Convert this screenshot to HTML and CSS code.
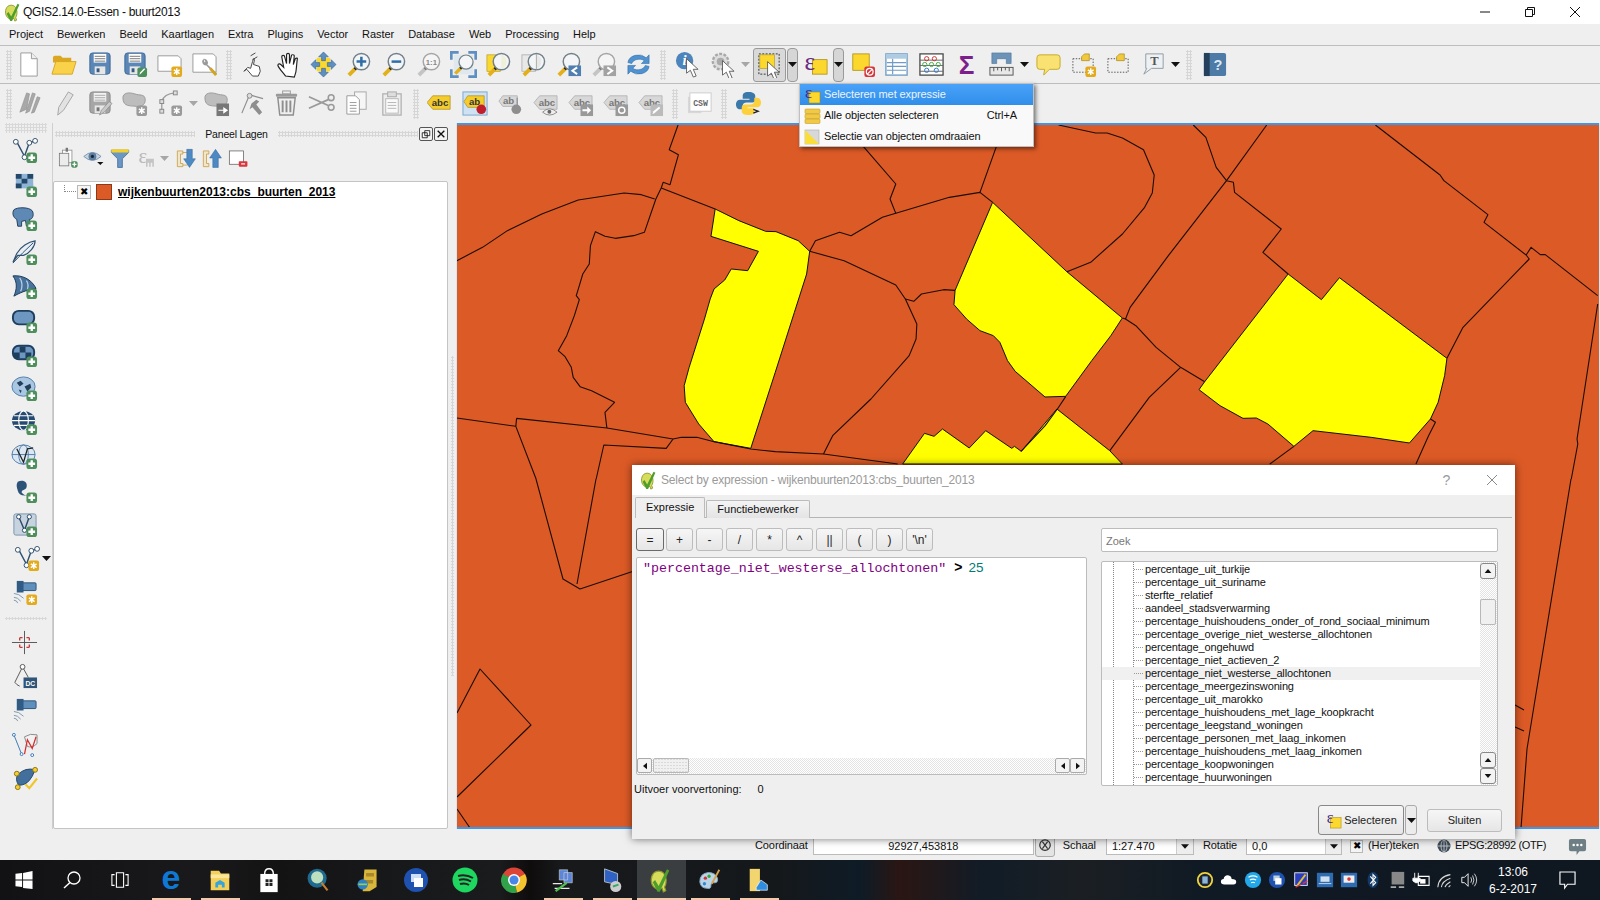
FILE: index.html
```html
<!DOCTYPE html>
<html lang="nl">
<head>
<meta charset="utf-8">
<title>QGIS2.14.0-Essen - buurt2013</title>
<link rel="stylesheet" href="styles.css">
</head>
<body>
<svg class="defs" aria-hidden="true">
<defs>
<g id="qgis"><path d="M5 5c-3 3-3 9 0 12 2 2 5 2 7 1l1 3 2-1-1-3c2-3 2-9-1-12-2-2-6-2-8 0z" fill="#d7dc5a" stroke="#8c9a2e"/><path d="M6 11l3 5 7-14 2 1-8 18-2 0-4-8z" fill="#4f9e2c"/></g>
<g id="plus"><rect x="16" y="16" width="11" height="11" rx="3" fill="#4f8f5c"/><path d="M21.500 18v7M18 21.500h7" stroke="#fff" stroke-width="2.400"/></g>
<g id="gear"><rect x="16" y="16" width="11" height="11" rx="2" fill="#e3aa1c"/><path d="M21.500 18v7M18.500 19.500l6 4M24.500 19.500l-6 4" stroke="#fff" stroke-width="1.500"/></g>
<g id="gearg"><rect x="16" y="16" width="11" height="11" rx="2" fill="#9a9a9a"/><path d="M21.500 18v7M18.500 19.500l6 4M24.500 19.500l-6 4" stroke="#fff" stroke-width="1.500"/></g>
<g id="doc"><path d="M5 2h11l6 6v18H5z" fill="#fff" stroke="#9a9a9a"/><path d="M16 2v6h6" fill="#eee" stroke="#9a9a9a"/></g>
<g id="open"><path d="M2 7q0-2 2-2h6l2 2h9v5H2z" fill="#dca720"/><path d="M5 11h21l-4 13H1z" fill="#fad24a" stroke="#d7a722"/></g>
<g id="save"><rect x="4" y="2" width="21" height="22" rx="3" fill="#5b87b6" stroke="#3d6898"/><rect x="8" y="3" width="13" height="9" fill="#fff"/><path d="M9 5.500h11M9 8h11M9 10.500h11" stroke="#777"/><rect x="9" y="16" width="11" height="8" fill="#e6e6e6"/><rect x="11" y="18" width="3" height="4" fill="#345a80"/></g>
<g id="saveg"><rect x="4" y="2" width="21" height="22" rx="3" fill="#a6a6a6" stroke="#8a8a8a"/><rect x="8" y="3" width="13" height="9" fill="#f2f2f2"/><path d="M9 5.500h11M9 8h11M9 10.500h11" stroke="#aaa"/><rect x="9" y="16" width="11" height="8" fill="#e6e6e6"/><rect x="11" y="18" width="3" height="4" fill="#777"/></g>
<g id="pen"><rect x="17" y="17" width="10" height="10" rx="2" fill="#4d8f5c"/><path d="M19 25l1-3 4-4 1 1-4 4z" fill="#fff"/></g>
<g id="compnew"><path d="M2 5h21l3 3v13H2z" fill="#fff" stroke="#9a9a9a"/><use href="#gear"/></g>
<g id="compmgr"><path d="M2 3h21l3 3v16H2z" fill="#fff" stroke="#9a9a9a"/><path d="M13 8a4 4 0 0 0 3 7l9 10 2-2-10-9a4 4 0 0 0-4-6l2 3-1 1z" fill="#9a9a9a"/><path d="M20 18l6 7" stroke="#d2a51e" stroke-width="3"/></g>
<g id="touch"><path d="M13 26l-6-7-3 2 4-4 3 1 2-7 1-3 1 1-1 5 6 2 1 5-2 5zM11 5l5-3M13 9l5-3" fill="#fff" stroke="#444"/></g>
<g id="hand"><path d="M11 26c-2-3-7-8-8-11 0-2 2-2 3-1l3 3-2-11c0-2 3-2 3 0l2 7V4c0-2 3-2 3 0v9l2-8c0-2 3-1 3 0l-1 9 2-6c1-1 3-1 2 1l-1 10c0 3-1 5-2 8z" fill="#fff" stroke="#222" stroke-width="1.200"/></g>
<g id="pansel"><rect x="7" y="7" width="14" height="14" fill="#fbd82f"/><path d="M14 1l5 5h-3v4h-4V6H9zM14 27l5-5h-3v-4h-4v4H9zM1 14l5-5v3h4v4H6v3zM27 14l-5-5v3h-4v4h4v3z" fill="#5d8fc0" stroke="#2f5f90" stroke-width=".6"/></g>
<g id="mag"><path d="M4 25l8-8" stroke="#e2b01a" stroke-width="4"/><path d="M10 19l3-3" stroke="#222" stroke-width="3"/><circle cx="17" cy="11" r="8.500" fill="#f3f5f6" stroke="#72808a" stroke-width="1.500"/></g>
<g id="magg"><path d="M4 25l8-8" stroke="#c4c4c4" stroke-width="4"/><path d="M10 19l3-3" stroke="#777" stroke-width="3"/><circle cx="17" cy="11" r="8.500" fill="#f5f5f5" stroke="#a5a5a5" stroke-width="1.500"/></g>
<g id="zoomin"><use href="#mag"/><path d="M12 11h10M17 6v10" stroke="#2f6ea8" stroke-width="2.600"/></g>
<g id="zoomout"><use href="#mag"/><path d="M12 11h10" stroke="#2f6ea8" stroke-width="2.600"/></g>
<g id="zoom11"><use href="#magg"/><text x="17" y="14.500" class="svg-tiny">1:1</text></g>
<g id="zoomfull"><path d="M1 9V1h8M27 9V1h-8M1 19v8h8M27 19v8h-8" fill="none" stroke="#5d8fc0" stroke-width="3.500"/><rect x="4" y="4" width="20" height="20" fill="#cfe0ef" opacity=".5"/><use href="#mag" transform="translate(2 2) scale(.86)"/></g>
<g id="zoomsel"><rect x="2" y="4" width="14" height="17" fill="#fbd82f" stroke="#a98e10" stroke-width=".6"/><use href="#mag"/><path d="M17 3.500a8 8 0 0 1 0 15z" fill="#eef0d8"/></g>
<g id="zoomlay"><rect x="2" y="4" width="14" height="17" fill="#e8e8e8" stroke="#aaa" stroke-width=".8"/><use href="#mag"/><path d="M17 3.500a8 8 0 0 1 0 15z" fill="#e8e8e8"/><path d="M17 3v16" stroke="#aaa"/></g>
<g id="zoomlast"><use href="#mag"/><rect x="14" y="15" width="13" height="11" fill="#4f7fb0"/><path d="M23 17l-5 3.500 5 3.500" fill="none" stroke="#fff" stroke-width="2"/></g>
<g id="zoomnext"><use href="#magg"/><rect x="14" y="15" width="13" height="11" fill="#a2a2a2"/><path d="M18 17l5 3.500-5 3.500" fill="none" stroke="#fff" stroke-width="2"/></g>
<g id="refresh"><path d="M3 12a11 9 0 0 1 19-5l3-3v9h-8l3-3a8 6 0 0 0-13 3z" fill="#4f92cf" stroke="#2f6ea8" stroke-width=".6"/><path d="M25 16a11 9 0 0 1-19 5l-3 3v-9h8l-3 3a8 6 0 0 0 13-3z" fill="#4f92cf" stroke="#2f6ea8" stroke-width=".6"/></g>
<g id="cursor"><path d="M0 0v15l4-3 3 7 3-1-3-7h5z" fill="#fff" stroke="#555" stroke-width=".9"/></g>
<g id="identify"><circle cx="11" cy="10" r="9" fill="#4d84bb"/><text x="11" y="15" class="svg-i">i</text><use href="#cursor" transform="translate(13 8)"/></g>
<g id="action"><circle cx="12" cy="11" r="8" fill="#ddd" stroke="#a8a8a8" stroke-width="2.500" stroke-dasharray="3 1.500"/><circle cx="12" cy="11" r="4" fill="#aaa"/><use href="#cursor" transform="translate(14 10)"/></g>
<g id="select"><rect x="3" y="3" width="21" height="21" fill="none" stroke="#333" stroke-dasharray="2 1.500"/><rect x="4" y="4" width="15" height="14" fill="#fcd82e" stroke="#b0920c" stroke-width=".6"/><use href="#cursor" transform="translate(12 11)"/></g>
<g id="selexp"><rect x="11" y="9" width="15" height="15" fill="#fcd82e" stroke="#a88a0a" stroke-width=".8"/><text x="8" y="20" class="svg-eps">&#949;</text></g>
<g id="deselect"><rect x="5" y="3" width="17" height="17" fill="#fcd82e" stroke="#a88a0a" stroke-width=".8"/><rect x="17" y="16" width="11" height="11" rx="2" fill="#d8363a"/><circle cx="22.500" cy="21.500" r="3.500" fill="none" stroke="#fff" stroke-width="1.300"/><path d="M20 24l5-5" stroke="#fff" stroke-width="1.300"/></g>
<g id="attr"><rect x="3" y="3" width="22" height="22" fill="#fff" stroke="#6f9cc6" stroke-width="1.400"/><rect x="3" y="3" width="22" height="5" fill="#aecbe4"/><path d="M4 12h20M4 16h20M4 20h20M10 8v16" stroke="#6f9cc6" stroke-width="1.200"/></g>
<g id="calc"><rect x="2" y="3" width="24" height="22" fill="#fff" stroke="#444" stroke-width="1.300"/><path d="M2 9.500h24M2 15h24M2 21h24" stroke="#666"/><circle cx="9" cy="8" r="2.200" fill="none" stroke="#c33"/><circle cx="17" cy="8" r="2.200" fill="none" stroke="#c33"/><circle cx="7" cy="14" r="2.200" fill="none" stroke="#4a4"/><circle cx="14" cy="14" r="2.200" fill="none" stroke="#4a4"/><circle cx="21" cy="14" r="2.200" fill="none" stroke="#4a4"/><circle cx="9" cy="20" r="2.200" fill="none" stroke="#37c"/><circle cx="19" cy="20" r="2.200" fill="none" stroke="#37c"/></g>
<g id="sigma"><text x="14" y="24" class="svg-sigma">&#931;</text></g>
<g id="measure"><path d="M4 2h20v11h-5V8h-10v5H4z" fill="#6d94b8" stroke="#456f96" stroke-width=".6"/><rect x="2" y="17" width="24" height="8" fill="#e8e8e8" stroke="#555"/><path d="M6 17v4M10 17v3M14 17v4M18 17v3M22 17v4" stroke="#555"/></g>
<g id="tip"><path d="M5 4h18q3 0 3 3v9q0 3-3 3h-8l-6 6 1-6H5q-3 0-3-3V7q0-3 3-3z" fill="#f9e272" stroke="#c7a92c"/></g>
<g id="bookmark"><rect x="3" y="8" width="21" height="14" fill="none" stroke="#555" stroke-dasharray="1.500 1.500"/><path d="M12 10V6l3-3h5v7z" fill="#f1c93c" stroke="#a5851a" stroke-width=".7"/></g>
<g id="bookmarkn"><use href="#bookmark"/><use href="#gear"/></g>
<g id="textann"><path d="M6 3h18v15H12l-8 6 3-6H6z" fill="#eef1f4" stroke="#8f9aa3"/><text x="15" y="15" class="svg-t">T</text></g>
<g id="help"><rect x="3" y="2" width="23" height="24" rx="2" fill="#4d7aa6"/><rect x="3" y="2" width="6" height="24" fill="#24405c"/><text x="17.500" y="20" class="svg-help">?</text></g>
<g id="arrowd"><path d="M0 0h11l-5.500 6z" fill="#111"/></g>
<g id="arrowg"><path d="M0 0h11l-5.500 6z" fill="#a6a6a6"/></g>
<g id="pencils"><path d="M4 23L11 3l3 1-3 16zM10 24l7-21 3 1-6 18zM16 24l6-17 3 1-6 15z" fill="#a8a8a8" stroke="#8a8a8a" stroke-width=".6"/></g>
<g id="pencil"><path d="M7 26l1-8L18 2l5 3-10 16z" fill="#e2e2e2" stroke="#a4a4a4"/></g>
<g id="saveedit"><use href="#saveg"/><path d="M14 26l2-5 8-9 3 2-8 9z" fill="#c9c9c9" stroke="#888" stroke-width=".7"/></g>
<g id="blob"><path d="M2 8c0-5 6-6 12-4s10 0 11 5-3 9-9 8-14 1-14-9z" fill="#bdbdbd" stroke="#9a9a9a"/></g>
<g id="addf"><use href="#blob"/><use href="#gearg"/></g>
<g id="node"><path d="M6 22V12Q8 4 20 3" fill="none" stroke="#9a9a9a" stroke-width="1.300"/><rect x="4" y="20" width="4" height="4" fill="#ddd" stroke="#888"/><rect x="4" y="10" width="4" height="4" fill="#ddd" stroke="#888"/><rect x="18" y="1" width="4" height="4" fill="#ddd" stroke="#888"/><use href="#gearg"/></g>
<g id="movef"><use href="#blob"/><rect x="14" y="14" width="13" height="13" fill="#777"/><path d="M16 20.500h5v-3l5 3.500-5 3.500v-3h-5z" fill="#fff"/></g>
<g id="nodetool"><path d="M4 24L12 5l14 4" fill="none" stroke="#8e8e8e" stroke-width="1.200"/><circle cx="12" cy="6" r="2.500" fill="#ddd" stroke="#888"/><path d="M14 14l5-4 3 2-3 3 6 8-3 3-7-8-3 2z" fill="#8e8e8e"/></g>
<g id="trash"><rect x="3" y="4" width="22" height="3" rx="1" fill="#9a9a9a"/><rect x="10" y="1" width="8" height="3" fill="none" stroke="#9a9a9a"/><path d="M5 8h18l-2 18H7z" fill="#efefef" stroke="#8e8e8e" stroke-width="1.500"/><path d="M10 11v12M14 11v12M18 11v12" stroke="#8e8e8e" stroke-width="2"/></g>
<g id="scissor"><path d="M1 7l20 9M1 19l20-9" stroke="#9a9a9a" stroke-width="1.800"/><circle cx="24" cy="8" r="3" fill="none" stroke="#9a9a9a" stroke-width="1.600"/><circle cx="24" cy="18" r="3" fill="none" stroke="#9a9a9a" stroke-width="1.600"/></g>
<g id="copy"><rect x="12" y="2" width="12" height="18" fill="#f6f6f6" stroke="#a8a8a8"/><path d="M4 6h9l4 4v15H4z" fill="#fff" stroke="#9a9a9a"/><path d="M7 13h7M7 16h7M7 19h7M7 22h7" stroke="#999"/></g>
<g id="paste"><rect x="5" y="4" width="19" height="22" fill="#ededed" stroke="#b0b0b0" stroke-width="1.300"/><rect x="10" y="2" width="9" height="5" fill="#ddd" stroke="#aaa"/><rect x="8" y="9" width="13" height="15" fill="#fafafa" stroke="#b8b8b8"/><path d="M10 13h9M10 16h9M10 19h9" stroke="#b5b5b5"/></g>
<g id="tagy"><path d="M6 6h18v14H6l-6-7z" fill="#f4cd2c" stroke="#a9871a" stroke-width=".7"/><text x="13.500" y="17" class="svg-abc">abc</text></g>
<g id="tagg"><path d="M8 6h18v14H8l-6-7z" fill="#d8d8d8" stroke="#a4a4a4" stroke-width=".7"/><text x="15.500" y="17" class="svg-abcg">abc</text></g>
<g id="tagpin"><rect x="1" y="2" width="25" height="24" fill="#cfe2f3" stroke="#7aa7cf"/><path d="M6 6h17v12H6l-4-6z" fill="#f4cd2c" stroke="#a9871a" stroke-width=".7"/><text x="13" y="15.500" class="svg-abc">ab</text><circle cx="20" cy="20" r="5" fill="#c21d2b"/></g>
<g id="tagpiong"><path d="M6 6h15v11H6l-4-5.500z" fill="#d8d8d8" stroke="#a4a4a4" stroke-width=".7"/><text x="12" y="15" class="svg-abcg">ab</text><path d="M21 8v11" stroke="#999" stroke-width="1.500"/><circle cx="20" cy="20" r="5" fill="#8e8e8e"/></g>
<g id="tageye"><use href="#tagg"/><path d="M11 23q7-7 15 0-8 6-15 0z" fill="#eee" stroke="#777" stroke-width=".8"/><circle cx="18" cy="22.500" r="2" fill="#666"/></g>
<g id="tagmove"><use href="#tagg"/><rect x="14" y="15" width="13" height="12" fill="#999"/><path d="M16 20h5v-3l4 4-4 4v-3h-5z" fill="#fff"/></g>
<g id="tagrot"><use href="#tagg"/><rect x="14" y="15" width="13" height="12" fill="#999"/><circle cx="20.500" cy="21" r="3.200" fill="none" stroke="#fff" stroke-width="1.500"/></g>
<g id="tagedit"><use href="#tagg"/><rect x="14" y="15" width="13" height="12" fill="#bbb"/><path d="M16 25l1-3 6-5 1 2-6 5z" fill="#fff"/></g>
<g id="csw"><rect x="1" y="7" width="14" height="17" fill="#d8d8d8"/><rect x="3" y="3" width="22" height="19" fill="#fff" stroke="#ccc"/><text x="14" y="16.500" class="svg-csw">CSW</text></g>
<g id="python"><path d="M14 2c-5 0-6 2-6 4v3h7v1H5c-3 0-4 3-4 5s1 5 4 5h3v-4c0-2 2-3 4-3h6c2 0 3-2 3-3V6c0-2-2-4-7-4z" fill="#3c79ab"/><path d="M14 26c5 0 6-2 6-4v-3h-7v-1h10c3 0 4-3 4-5s-1-5-4-5h-3v4c0 2-2 3-4 3H10c-2 0-3 2-3 3v4c0 2 2 4 7 4z" fill="#fdd13c"/><path d="M19 20l5 2-5 2" fill="none" stroke="#222" stroke-width="1.400"/></g>
<g id="vline"><path d="M6 5l8 15 5-14 6-2" fill="none" stroke="#30506e" stroke-width="1.500"/><circle cx="5" cy="5" r="2.500" fill="#fff" stroke="#30506e"/><circle cx="14" cy="21" r="2.500" fill="#fff" stroke="#30506e"/><circle cx="19" cy="6" r="2.500" fill="#fff" stroke="#30506e"/><circle cx="25" cy="4" r="2.500" fill="#fff" stroke="#30506e"/></g>
<g id="v1"><use href="#vline"/><use href="#plus"/></g>
<g id="v2"><path d="M5 3h18v15H5z" fill="#8fb3d4"/><path d="M5 3h6v5H5zM17 3h6v5h-6zM11 8h6v5h-6zM5 13h6v5H5z" fill="#244868"/><path d="M17 13h6v5h-6z" fill="#8fb3d4"/><use href="#plus"/></g>
<g id="v3"><path d="M3 5c3-3 16-3 19 1 2 3 1 9-3 9l1 7h-4l-1-6-4 1 0 5H7l-1-7c-4-2-5-7-3-10z" fill="#5f89b5" stroke="#22415f"/><use href="#plus"/></g>
<g id="v4"><path d="M2 24l4-9C10 8 18 3 25 2c0 6-6 13-12 15H7z" fill="#e8eef4" stroke="#2d5071" stroke-width="1.200"/><path d="M2 25q10-11 21-21" stroke="#2d5071" fill="none"/><use href="#plus"/></g>
<g id="v5"><path d="M2 3c9-1 19 3 24 13-7 1-14 3-23 8 3-7 4-14-1-21z" fill="#48729c" stroke="#1c3a58"/><path d="M9 5c3 4 3 10 1 14M16 8c2 3 2 6 1 9" stroke="#b9d0e6" fill="none" stroke-width="1.300"/><use href="#plus"/></g>
<g id="v6"><rect x="2" y="4" width="22" height="14" rx="6" fill="#6d96c1" stroke="#1e3e5e" stroke-width="2"/><use href="#plus"/></g>
<g id="v7"><rect x="2" y="5" width="22" height="14" rx="6" fill="#6d96c1" stroke="#1e3e5e" stroke-width="2"/><path d="M9 6h6v6H9zM3 12h6v6H3zM15 12h6v6h-6z" fill="#1e3e5e"/><use href="#plus"/></g>
<g id="v8"><ellipse cx="13" cy="12" rx="12" ry="10" fill="#a9c6e2" stroke="#527ea8"/><path d="M6 8l4-2 3 3-4 3zM14 12l6-3 1 4-4 4zM8 15l3 1-1 3z" fill="#243f5a"/><use href="#plus"/></g>
<g id="v9"><ellipse cx="13" cy="12" rx="12" ry="10" fill="#274b70"/><path d="M1 12h24M3 7h20M3 17h20" stroke="#fff" stroke-width="1.200"/><ellipse cx="13" cy="12" rx="5" ry="10" fill="none" stroke="#fff" stroke-width="1.200"/><use href="#plus"/></g>
<g id="v10"><ellipse cx="13" cy="12" rx="12" ry="10" fill="#dbe8f4" stroke="#527ea8"/><path d="M1 12h24" stroke="#527ea8"/><ellipse cx="13" cy="12" rx="5" ry="10" fill="none" stroke="#527ea8"/><path d="M6 6l7 14 4-14 6-1" fill="none" stroke="#222" stroke-width="1.300"/><use href="#plus"/></g>
<g id="v11"><path d="M7 5c5-3 11 0 9 6-1 3-5 2-5 5 2 2 3 3 6 3-6 1-9-1-10-5-1-3-2-6 0-9z" fill="#2c5278"/><use href="#plus"/></g>
<g id="v12"><rect x="3" y="3" width="23" height="22" rx="2" fill="#c7d4df" stroke="#7a94aa"/><path d="M8 6l6 14 5-14" fill="none" stroke="#2d4a66" stroke-width="1.500"/><circle cx="8" cy="6" r="2.200" fill="#fff" stroke="#2d4a66"/><circle cx="14" cy="20" r="2.200" fill="#fff" stroke="#2d4a66"/><circle cx="19" cy="6" r="2.200" fill="#fff" stroke="#2d4a66"/><use href="#plus"/></g>
<g id="v13"><use href="#vline"/><use href="#gear"/></g>
<g id="ticket"><rect x="8" y="4" width="18" height="8" rx="1" fill="#5f8fbb" stroke="#2e5478"/><rect x="6" y="2" width="7" height="12" fill="#2f5b85"/><path d="M3 15q5 0 10 5M3 19q4 0 7 4M3 22q3 0 4 3" fill="none" stroke="#7f98ad"/></g>
<g id="v14"><use href="#ticket"/><use href="#gear"/></g>
<g id="v15"><path d="M14 2v24M1 14h26" stroke="#555"/><path d="M9 9h3M16 9h3M9 19h3M16 19h3M9 9v3M19 9v3M9 16v3M19 16v3" stroke="#c73a3a" stroke-width="1.400"/></g>
<g id="v16"><circle cx="12" cy="4" r="2.500" fill="#fff" stroke="#555"/><path d="M11 6L4 20q2 3 5 4M13 6l5 9" fill="none" stroke="#555"/><rect x="13" y="15" width="14" height="11" fill="#2f5578"/><text x="20" y="24" class="svg-dc">DC</text></g>
<g id="v17"><use href="#ticket"/></g>
<g id="v18"><path d="M3 4l8 20" stroke="#3a78b8"/><circle cx="3" cy="4" r="1.500" fill="#fff" stroke="#3a78b8"/><circle cx="11" cy="24" r="1.500" fill="#fff" stroke="#3a78b8"/><path d="M14 6q6-4 13-2v9q-5 5-10 3z" fill="#f2f2f2" stroke="#888"/><path d="M14 24l3-15 5 9 4-12" fill="none" stroke="#d42f2f" stroke-width="1.300"/><circle cx="22" cy="25" r="1.500" fill="#fff" stroke="#3a78b8"/></g>
<g id="v19"><path d="M7 10q8-8 18-5-3 8-6 11-4 5-11 5-4-6-1-11z" fill="#426f9c" stroke="#24476a"/><circle cx="6" cy="9" r="2.500" fill="#f6cf2e" stroke="#8a7414"/><circle cx="25" cy="5" r="2.500" fill="#f6cf2e" stroke="#8a7414"/><circle cx="7" cy="23" r="2.500" fill="#f6cf2e" stroke="#8a7414"/><path d="M15 20l4 4 8-10" fill="none" stroke="#efc62a" stroke-width="2.200"/></g>
<g id="ladd"><rect x="7" y="4" width="12" height="16" fill="#fff" stroke="#8a8a8a"/><rect x="3" y="8" width="12" height="16" fill="#ececec" stroke="#777"/><rect x="11" y="1" width="3" height="5" fill="#777"/><use href="#plus" transform="translate(6 6) scale(.75)"/></g>
<g id="leye"><path d="M1 12q11-10 22 0-11 10-22 0z" fill="#c6d6e4" stroke="#6787a5"/><circle cx="12" cy="12" r="5" fill="#5e7e9d"/><circle cx="12" cy="12" r="2" fill="#17273a"/><path d="M18 19h8l-4 4z" fill="#111"/></g>
<g id="lfilter"><path d="M3 4h22v3l-8 8v11h-6V15L3 7z" fill="#6a97c4" stroke="#3d6a96"/><rect x="3" y="3" width="22" height="4" fill="#f3d128"/></g>
<g id="lexp"><text x="10" y="20" class="svg-epsg">&#949;</text><path d="M14 15h10v10h-2v-5h-2v5h-2v-5h-2v5h-2z" fill="#c4c4c4"/></g>
<g id="lexpand"><path d="M3 5h7v4H7v12h3v4H3z" fill="#f1e6c6" stroke="#c79a45"/><path d="M10 7h6M10 23h6" stroke="#c79a45"/><path d="M15 3h7v12h4l-7.500 11L11 15h4z" fill="#4d8ac4" stroke="#2c5f90" stroke-width=".6"/></g>
<g id="lcollapse"><path d="M3 5h7v4H7v12h3v4H3z" fill="#f1e6c6" stroke="#c79a45"/><path d="M15 26h7V14h4L18.500 3 11 14h4z" fill="#4d8ac4" stroke="#2c5f90" stroke-width=".6"/></g>
<g id="lremove"><rect x="3" y="5" width="18" height="17" fill="#fff" stroke="#666"/><rect x="15" y="18" width="11" height="7" rx="1" fill="#d8363a"/><path d="M18 21.500h5" stroke="#fff" stroke-width="1.500"/></g>
<g id="m1"><rect x="6" y="6" width="11" height="11" fill="#fcd82e" stroke="#a88a0a" stroke-width=".6"/><text x="5.500" y="12" class="svg-epsm">&#949;</text></g>
<g id="m2"><rect x="2" y="2" width="15" height="4.500" rx="1" fill="#f2c944" stroke="#c79d24" stroke-width=".6"/><rect x="2" y="7" width="15" height="4.500" rx="1" fill="#f2c944" stroke="#c79d24" stroke-width=".6"/><rect x="2" y="12" width="15" height="4.500" rx="1" fill="#f2c944" stroke="#c79d24" stroke-width=".6"/></g>
<g id="m3"><rect x="2" y="2" width="14" height="14" fill="#d8d8d8" stroke="#aaa" stroke-width=".6"/><path d="M2 2l14 14H2z" fill="#fbdd3a"/></g>
<g id="winlogo"><path d="M0 3l7-1v7H0zM8 2l10-2v9H8zM0 10h7v7l-7-1zM8 10h10v9L8 18z" fill="#fff"/></g>
</defs>
</svg>

<header class="titlebar">
  <svg class="t-icon" viewBox="0 0 22 22"><use href="#qgis"/></svg>
  <span class="t-text">QGIS2.14.0-Essen - buurt2013</span>
  <div class="t-ctrl">
    <svg class="t-btn" viewBox="0 0 12 12"><path d="M1 6h10" stroke="#111"/></svg>
    <svg class="t-btn" viewBox="0 0 12 12"><path d="M1.500 3.500h7v7h-7zM3.500 3.500v-2h7v7h-2" fill="none" stroke="#111"/></svg>
    <svg class="t-btn" viewBox="0 0 12 12"><path d="M1 1l10 10M11 1L1 11" stroke="#111"/></svg>
  </div>
</header>

<nav class="menubar">
  <span>Project</span><span>Bewerken</span><span>Beeld</span><span>Kaartlagen</span><span>Extra</span><span>Plugins</span><span>Vector</span><span>Raster</span><span>Database</span><span>Web</span><span>Processing</span><span>Help</span>
</nav>

<div class="toolbar">
  <div class="grip-box g12"><i class="grip"></i></div>
  <div class="b"><svg viewBox="0 0 28 28"><use href="#doc"/></svg></div>
  <div class="b"><svg viewBox="0 0 28 28"><use href="#open"/></svg></div>
  <div class="b"><svg viewBox="0 0 28 28"><use href="#save"/></svg></div>
  <div class="b"><svg viewBox="0 0 28 28"><use href="#save"/><use href="#pen"/></svg></div>
  <div class="b"><svg viewBox="0 0 28 28"><use href="#compnew"/></svg></div>
  <div class="b"><svg viewBox="0 0 28 28"><use href="#compmgr"/></svg></div>
  <div class="grip-box g13"><i class="grip"></i></div>
  <div class="b"><svg viewBox="0 0 28 28"><use href="#touch"/></svg></div>
  <div class="b"><svg viewBox="0 0 28 28"><use href="#hand"/></svg></div>
  <div class="b"><svg viewBox="0 0 28 28"><use href="#pansel"/></svg></div>
  <div class="b"><svg viewBox="0 0 28 28"><use href="#zoomin"/></svg></div>
  <div class="b"><svg viewBox="0 0 28 28"><use href="#zoomout"/></svg></div>
  <div class="b"><svg viewBox="0 0 28 28"><use href="#zoom11"/></svg></div>
  <div class="b"><svg viewBox="0 0 28 28"><use href="#zoomfull"/></svg></div>
  <div class="b"><svg viewBox="0 0 28 28"><use href="#zoomsel"/></svg></div>
  <div class="b"><svg viewBox="0 0 28 28"><use href="#zoomlay"/></svg></div>
  <div class="b"><svg viewBox="0 0 28 28"><use href="#zoomlast"/></svg></div>
  <div class="b"><svg viewBox="0 0 28 28"><use href="#zoomnext"/></svg></div>
  <div class="b"><svg viewBox="0 0 28 28"><use href="#refresh"/></svg></div>
  <div class="grip-box g14"><i class="grip"></i></div>
  <div class="b"><svg viewBox="0 0 28 28"><use href="#identify"/></svg></div>
  <div class="b"><svg viewBox="0 0 28 28"><use href="#action"/></svg></div>
  <div class="arr"><svg viewBox="0 0 11 6"><use href="#arrowg"/></svg></div>
  <div class="b pressed"><svg viewBox="0 0 28 28"><use href="#select"/></svg></div>
  <div class="drop"><svg viewBox="0 0 11 6"><use href="#arrowd"/></svg></div>
  <div class="b"><svg viewBox="0 0 28 28"><use href="#selexp"/></svg></div>
  <div class="drop"><svg viewBox="0 0 11 6"><use href="#arrowd"/></svg></div>
  <div class="b"><svg viewBox="0 0 28 28"><use href="#deselect"/></svg></div>
  <div class="b"><svg viewBox="0 0 28 28"><use href="#attr"/></svg></div>
  <div class="b"><svg viewBox="0 0 28 28"><use href="#calc"/></svg></div>
  <div class="b"><svg viewBox="0 0 28 28"><use href="#sigma"/></svg></div>
  <div class="b"><svg viewBox="0 0 28 28"><use href="#measure"/></svg></div>
  <div class="arr"><svg viewBox="0 0 11 6"><use href="#arrowd"/></svg></div>
  <div class="b"><svg viewBox="0 0 28 28"><use href="#tip"/></svg></div>
  <div class="b"><svg viewBox="0 0 28 28"><use href="#bookmarkn"/></svg></div>
  <div class="b"><svg viewBox="0 0 28 28"><use href="#bookmark"/></svg></div>
  <div class="b"><svg viewBox="0 0 28 28"><use href="#textann"/></svg></div>
  <div class="arr a10"><svg viewBox="0 0 11 6"><use href="#arrowd"/></svg></div>
  <div class="grip-box g16"><i class="grip"></i></div>
  <div class="b"><svg viewBox="0 0 28 28"><use href="#help"/></svg></div>
</div>

<div class="toolbar t2">
  <div class="grip-box g12"><i class="grip"></i></div>
  <div class="b"><svg viewBox="0 0 28 28"><use href="#pencils"/></svg></div>
  <div class="b"><svg viewBox="0 0 28 28"><use href="#pencil"/></svg></div>
  <div class="b"><svg viewBox="0 0 28 28"><use href="#saveedit"/></svg></div>
  <div class="b"><svg viewBox="0 0 28 28"><use href="#addf"/></svg></div>
  <div class="b"><svg viewBox="0 0 28 28"><use href="#node"/></svg></div>
  <div class="arr"><svg viewBox="0 0 11 6"><use href="#arrowg"/></svg></div>
  <div class="b"><svg viewBox="0 0 28 28"><use href="#movef"/></svg></div>
  <div class="b"><svg viewBox="0 0 28 28"><use href="#nodetool"/></svg></div>
  <div class="b"><svg viewBox="0 0 28 28"><use href="#trash"/></svg></div>
  <div class="b"><svg viewBox="0 0 28 28"><use href="#scissor"/></svg></div>
  <div class="b"><svg viewBox="0 0 28 28"><use href="#copy"/></svg></div>
  <div class="b"><svg viewBox="0 0 28 28"><use href="#paste"/></svg></div>
  <div class="grip-box g13"><i class="grip"></i></div>
  <div class="b"><svg viewBox="0 0 28 28"><use href="#tagy"/></svg></div>
  <div class="b"><svg viewBox="0 0 28 28"><use href="#tagpin"/></svg></div>
  <div class="b"><svg viewBox="0 0 28 28"><use href="#tagpiong"/></svg></div>
  <div class="b"><svg viewBox="0 0 28 28"><use href="#tageye"/></svg></div>
  <div class="b"><svg viewBox="0 0 28 28"><use href="#tagmove"/></svg></div>
  <div class="b"><svg viewBox="0 0 28 28"><use href="#tagrot"/></svg></div>
  <div class="b"><svg viewBox="0 0 28 28"><use href="#tagedit"/></svg></div>
  <div class="grip-box g15"><i class="grip"></i></div>
  <div class="b"><svg viewBox="0 0 28 28"><use href="#csw"/></svg></div>
  <div class="grip-box g13"><i class="grip"></i></div>
  <div class="b"><svg viewBox="0 0 28 28"><use href="#python"/></svg></div>
</div>

<main class="main">
  <aside class="leftbar">
    <i class="hgrip"></i>
    <div class="lb"><svg viewBox="0 0 28 28"><use href="#v1"/></svg></div>
    <div class="lb"><svg viewBox="0 0 28 28"><use href="#v2"/></svg></div>
    <div class="lb"><svg viewBox="0 0 28 28"><use href="#v3"/></svg></div>
    <div class="lb"><svg viewBox="0 0 28 28"><use href="#v4"/></svg></div>
    <div class="lb"><svg viewBox="0 0 28 28"><use href="#v5"/></svg></div>
    <div class="lb"><svg viewBox="0 0 28 28"><use href="#v6"/></svg></div>
    <div class="lb"><svg viewBox="0 0 28 28"><use href="#v7"/></svg></div>
    <div class="lb"><svg viewBox="0 0 28 28"><use href="#v8"/></svg></div>
    <div class="lb"><svg viewBox="0 0 28 28"><use href="#v9"/></svg></div>
    <div class="lb"><svg viewBox="0 0 28 28"><use href="#v10"/></svg></div>
    <div class="lb"><svg viewBox="0 0 28 28"><use href="#v11"/></svg></div>
    <div class="lb"><svg viewBox="0 0 28 28"><use href="#v12"/></svg></div>
    <div class="lb lb-arrow"><svg viewBox="0 0 28 28"><use href="#v13"/></svg><svg class="lb-a" viewBox="0 0 11 6"><use href="#arrowd"/></svg></div>
    <div class="lb"><svg viewBox="0 0 28 28"><use href="#v14"/></svg></div>
    <i class="hgrip mid"></i>
    <div class="lb"><svg viewBox="0 0 28 28"><use href="#v15"/></svg></div>
    <div class="lb"><svg viewBox="0 0 28 28"><use href="#v16"/></svg></div>
    <div class="lb"><svg viewBox="0 0 28 28"><use href="#v17"/></svg></div>
    <div class="lb"><svg viewBox="0 0 28 28"><use href="#v18"/></svg></div>
    <div class="lb"><svg viewBox="0 0 28 28"><use href="#v19"/></svg></div>
  </aside>

  <section class="panel">
    <div class="p-title">
      <i class="p-grip"></i><span class="p-name">Paneel Lagen</span><i class="p-grip"></i>
      <span class="p-btn"><svg viewBox="0 0 12 12"><path d="M4.500 2h6v6h-6zM1.500 4.500h6v6h-6z" fill="#fff" stroke="#111"/></svg></span>
      <span class="p-btn"><svg viewBox="0 0 12 12"><path d="M2 2l8 8M10 2l-8 8" stroke="#111" stroke-width="1.600"/></svg></span>
    </div>
    <div class="p-tools">
      <svg viewBox="0 0 28 28"><use href="#ladd"/></svg>
      <svg viewBox="0 0 28 28"><use href="#leye"/></svg>
      <svg viewBox="0 0 28 28"><use href="#lfilter"/></svg>
      <svg viewBox="0 0 28 28"><use href="#lexp"/></svg>
      <svg class="p-arr" viewBox="0 0 11 6"><use href="#arrowg"/></svg>
      <svg viewBox="0 0 28 28"><use href="#lexpand"/></svg>
      <svg viewBox="0 0 28 28"><use href="#lcollapse"/></svg>
      <svg viewBox="0 0 28 28"><use href="#lremove"/></svg>
    </div>
    <div class="p-tree">
      <div class="p-row">
        <i class="p-tick"></i>
        <span class="cb">&#10006;</span>
        <i class="swatch"></i>
        <b class="layer">wijkenbuurten2013:cbs_buurten_2013</b>
      </div>
    </div>
  </section>
  <div class="splitter"><i class="vgrip"></i></div>

  <svg class="map" viewBox="456 124 1144 706" width="1144" height="706">
    <rect x="456" y="124" width="1144" height="706" fill="#dc5a26"/>
    <g transform="translate(450 120) scale(.38265 .33333)" class="mp">
      <path class="y" d="M693 270L755 305 825 337 852 338 910 365 940 397 932 465 900 580 850 760 786 988 690 968 650 915 615 850 612 800 625 745 665 600 680 540 690 510 718 483 735 450 778 455 806 397 682 352Z"/>
      <path class="y" d="M1418 250L1612 458 1757 597 1727 650 1677 725 1609 832 1555 834 1477 757 1457 725 1437 670 1420 650 1385 635 1350 600 1317 557 1320 514Z"/>
      <path class="y" d="M1183 1035L1240 943 1265 952 1287 930 1357 987 1400 935 1468 988 1475 982 1493 997 1586 870 1724 995 1757 1035Z"/>
      <path class="l" d="M596 18L573 92 597 107 575 197 557 190 552 207 538 240 508 340 480 350 432 358 405 352 380 338 367 380 364 435 347 465 338 500 330 530 338 542 325 590 305 650 283 695 300 712 317 745 322 775 340 803 370 815 430 850 405 880 410 927"/>
      <path class="l" d="M18 425L85 385 150 335 240 285 335 243 455 222 500 227 535 240"/>
      <path class="l" d="M552 207L693 270"/>
      <path class="l" d="M18 897L172 922M174 898L410 927 583 960M172 922L225 1080M174 898L172 922M583 960L565 988 402 978 382 1080"/>
      <path class="l" d="M583 960L605 955 645 955 690 968 786 990 850 998 976 1005 1170 1035"/>
      <path class="l" d="M940 397L1030 425 1165 498 1190 540 1220 615 1218 660 1200 710 1100 840 1000 950 976 1005"/>
      <path class="l" d="M1190 540L1212 547 1232 525 1290 512 1320 514"/>
      <path class="l" d="M940 397L955 365 1018 340 1048 350 1130 295 1165 283 1305 235 1385 220 1418 250"/>
      <path class="l" d="M1080 82L1165 195 1150 240 1165 283M1428 82L1385 220"/>
    </g>
    <g transform="translate(1000 120) scale(.38265 .33333)" class="mp">
      <path class="y" d="M753 465L840 542 887 476 1168 718 1162 770 1145 850 1125 900 1070 972 970 955 818 935 768 982 700 915 670 897 635 898 575 860 520 812 535 788Z"/>
      <path class="l" d="M153 18L250 42 280 42 320 57 375 92 403 168 398 222 378 265 320 345 237 430 175 458"/>
      <path class="l" d="M505 18L538 55 565 145 592 185 610 190 613 220 735 330 687 400 753 465"/>
      <path class="l" d="M697 18L592 185 440 410 340 565 328 600 320 597"/>
      <path class="l" d="M328 600L355 620 408 685 472 745 535 788"/>
      <path class="l" d="M472 745L390 835 287 995"/>
      <path class="l" d="M172 832L150 870 118 920 55 997"/>
      <path class="l" d="M981 18L1150 168 1160 185 1275 287 1265 310 1375 408 1383 420 1210 625 1168 718"/>
      <path class="l" d="M1125 900L1138 910 1120 950 1087 1035"/>
      <path class="l" d="M768 982L705 1035"/>
      <path class="l" d="M1375 408L1388 385 1412 407 1425 407 1562 530"/>
      <path class="l" d="M1562 555L1508 960 1510 975 1493 1080"/>
    </g>
    <g class="mp">
      <path class="l" d="M536 480L563 580 580 590 640 570M596 480L577 585"/>
      <path class="l" d="M457 714L480 670 531 726 457 798M457 810L470 829"/>
      <path class="l" d="M1571 480L1527 750 1521 829M1515 706L1524 711M1515 728L1524 732"/>
    </g>
    <rect x="456" y="124" width="1144" height="2" fill="#3f97e8"/>
    <rect x="456" y="828" width="1144" height="2" fill="#3f97e8"/>
    <rect x="456" y="124" width="1" height="706" fill="#cfe8f7"/>
    <rect x="1599" y="124" width="1" height="706" fill="#cfe8f7"/>
  </svg>
</main>

<footer class="status">
  <span class="s-label">Coordinaat</span>
  <span class="s-coord">92927,453818</span>
  <span class="s-lock"><svg viewBox="0 0 16 18"><circle cx="8" cy="8" r="6" fill="#ddd" stroke="#333" stroke-width="1.400"/><path d="M5 4l6 8M11 4L5 12" stroke="#333" stroke-width="1.300"/></svg></span>
  <span class="s-label s-schaal">Schaal</span>
  <span class="s-combo">1:27.470<i class="s-caret"><svg viewBox="0 0 11 6"><use href="#arrowd"/></svg></i></span>
  <span class="s-label s-rot">Rotatie</span>
  <span class="s-spin">0,0<i class="s-spinb"><svg viewBox="0 0 11 6"><use href="#arrowd"/></svg></i></span>
  <span class="cb cb-s">&#10006;</span>
  <span class="s-label s-ren">(Her)teken</span>
  <svg class="s-globe" viewBox="0 0 14 14"><circle cx="7" cy="7" r="6.500" fill="#3d4a55"/><path d="M1 7h12M7 1v12" stroke="#cfd6dc" stroke-width=".8"/><ellipse cx="7" cy="7" rx="3" ry="6" fill="none" stroke="#cfd6dc" stroke-width=".8"/></svg>
  <span class="s-label s-epsg">EPSG:28992 (OTF)</span>
  <svg class="s-msg" viewBox="0 0 20 20"><path d="M3 2h14q2 0 2 2v9q0 2-2 2h-5l-3 4v-4H3q-2 0-2-2V4q0-2 2-2z" fill="#6d7f85"/><circle cx="6" cy="8.500" r="1.300" fill="#fff"/><circle cx="10" cy="8.500" r="1.300" fill="#fff"/><circle cx="14" cy="8.500" r="1.300" fill="#fff"/></svg>
</footer>

<div class="taskbar">
  <div class="tk"><svg class="tk-s" viewBox="0 0 18 19"><use href="#winlogo"/></svg></div>
  <div class="tk"><svg class="tk-s" viewBox="0 0 18 18"><circle cx="11" cy="7" r="6" fill="none" stroke="#fff" stroke-width="1.300"/><path d="M7 11.500L1 17" stroke="#fff" stroke-width="1.500"/></svg></div>
  <div class="tk"><svg class="tk-s" viewBox="0 0 20 18"><path d="M6 1h8v16H6zM4 3H1v12h3M16 3h3v12h-3" fill="none" stroke="#fff" stroke-width="1.200"/></svg></div>
  <div class="tk tk-first on"><span class="edge">e</span></div>
  <div class="tk w49 on"><svg viewBox="0 0 24 28"><path d="M2 4h9l2 3h9v18H2z" fill="#f4d05a"/><path d="M2 8h20v4H2z" fill="#fbe69a"/><path d="M7 22v-5l5-3 5 3v5h-3v-3h-4v3z" fill="#33a5dc"/></svg></div>
  <div class="tk w49"><svg viewBox="0 0 24 30"><path d="M2 8h20v21H2z" fill="#fff"/><path d="M7 8q0-6 5-6t5 6" fill="none" stroke="#fff" stroke-width="1.600"/><path d="M8 14h3.500v3.500H8zM12.500 14H16v3.500h-3.500zM8 18.500h3.500V22H8zM12.500 18.500H16V22h-3.500z" fill="#222"/></svg></div>
  <div class="tk w49"><svg viewBox="0 0 26 30"><circle cx="12" cy="13" r="11" fill="#1f6a8e"/><circle cx="12" cy="12" r="7" fill="#bce0c0"/><path d="M17 18l7 9" stroke="#c47f33" stroke-width="2.400"/></svg></div>
  <div class="tk w49"><svg viewBox="0 0 26 30"><path d="M10 3h14v20l-8 5H8z" fill="#d9b73d"/><path d="M12 7h9v4h-9zM11 15h9v4h-9z" fill="#a8882a"/><circle cx="8" cy="20" r="6" fill="#2f7fc8"/><path d="M3 20h10" stroke="#8fd04f" stroke-width="2"/></svg></div>
  <div class="tk w49"><svg viewBox="0 0 26 26"><circle cx="13" cy="13" r="12" fill="#1f52b0"/><path d="M8 7h10v8H8z" fill="#cfdff5"/><path d="M11 11h9v9h-9z" fill="#fff"/></svg></div>
  <div class="tk w49"><svg viewBox="0 0 26 26"><circle cx="13" cy="13" r="12.500" fill="#1ed760"/><path d="M6 9q8-2 15 2M7 13q6-2 12 1.500M8 17q5-1.500 9 1" fill="none" stroke="#222" stroke-width="2"/></svg></div>
  <div class="tk w49"><svg viewBox="0 0 26 26"><circle cx="13" cy="13" r="12.500" fill="#db4437"/><path d="M13 13L24 7a12.500 12.500 0 0 1-8 18.500z" fill="#f4c430"/><path d="M13 13l3 12.500A12.500 12.500 0 0 1 2 7z" fill="#2fa24a"/><circle cx="13" cy="13" r="6" fill="#fff"/><circle cx="13" cy="13" r="4.500" fill="#4a86e8"/></svg></div>
  <div class="tk w49 on"><svg viewBox="0 0 26 28"><path d="M9 3h9v11H9zM14 6h9v11h-9z" fill="#5d86d6" stroke="#ddd" stroke-width=".6"/><path d="M2 18h10M4 23h16" stroke="#e8e8e8" stroke-width="1.400"/><path d="M5 26l12-9" stroke="#4fc04f" stroke-width="2.400"/></svg></div>
  <div class="tk w49 on"><svg viewBox="0 0 26 28"><path d="M5 2l14 5v12L5 16z" fill="#2f62c4" stroke="#ddd" stroke-width=".8"/><circle cx="17" cy="21" r="6" fill="#ccc"/><path d="M14 21l6-2" stroke="#3a6" stroke-width="2"/></svg></div>
  <div class="tk w49 on act"><svg viewBox="0 0 22 22"><use href="#qgis"/></svg></div>
  <div class="tk w49 on"><svg viewBox="0 0 26 28"><path d="M2 16q0-9 9-10 8 0 10 6 1 5-3 5-4-1-4 3t-4 3Q3 23 2 16z" fill="#b9d3e8" stroke="#8ba9c0"/><circle cx="8" cy="12" r="1.800" fill="#c33"/><circle cx="12" cy="10" r="1.800" fill="#3a3"/><circle cx="7" cy="18" r="1.800" fill="#38c"/><path d="M15 18L23 3" stroke="#d5a34c" stroke-width="2"/></svg></div>
  <div class="tk w49 on"><svg viewBox="0 0 24 28"><path d="M2 2h11v24H2z" fill="#f2d56e"/><path d="M9 22l5-8 7 5v6H9z" fill="#2f8de0" stroke="#fff" stroke-width=".7"/></svg></div>
  <div class="tray">
    <svg viewBox="0 0 20 20"><circle cx="10" cy="10" r="8" fill="#1b2430" stroke="#f2d43c" stroke-width="2"/><rect x="7" y="6" width="6" height="8" fill="#8db5d8"/></svg>
    <svg viewBox="0 0 20 20"><path d="M5 15q-4 0-4-3t3-3q1-5 6-4 3 1 3 4 5 0 5 3t-3 3z" fill="#fff"/></svg>
    <svg viewBox="0 0 20 20"><circle cx="10" cy="10" r="9" fill="#23a7e8"/><path d="M5 7q5-3 10 0M6.500 10q3.500-2 7 0M8 13q2-1 4 0" fill="none" stroke="#fff" stroke-width="1.300"/></svg>
    <svg viewBox="0 0 20 20"><circle cx="10" cy="10" r="9" fill="#1f52b0"/><path d="M6 5h7v6H6z" fill="#bcd"/><path d="M8 8h7v7H8z" fill="#fff"/></svg>
    <svg viewBox="0 0 20 20"><rect x="3" y="2" width="14" height="14" fill="#2a3ec0" stroke="#eee"/><path d="M6 16L15 4" stroke="#e6c02e" stroke-width="2"/><path d="M4 18l6-3M12 14l5-3" stroke="#d33" stroke-width="1.500"/></svg>
    <svg viewBox="0 0 20 20"><rect x="1" y="2" width="18" height="16" fill="#2f6bb0"/><rect x="5" y="6" width="10" height="6" fill="#cfe0f0"/><path d="M3 14h14" stroke="#cfe0f0"/></svg>
    <svg viewBox="0 0 20 20"><rect x="1" y="2" width="18" height="16" fill="#2f6bb0"/><rect x="4" y="5" width="12" height="8" fill="#eee"/><circle cx="10" cy="9" r="2" fill="#d33"/></svg>
    <svg viewBox="0 0 20 20"><ellipse cx="10" cy="10" rx="6" ry="9" fill="#123a66"/><path d="M7 6l6 7-3 3V4l3 3-6 7" fill="none" stroke="#fff" stroke-width="1.200"/></svg>
    <svg viewBox="0 0 20 20"><rect x="4" y="1" width="14" height="14" fill="#888"/><path d="M3 18h6M12 18h6" stroke="#aaa" stroke-width="2"/></svg>
    <svg viewBox="0 0 20 20"><path d="M7 6h12v10H7z" fill="none" stroke="#fff" stroke-width="1.200"/><rect x="9" y="9" width="6" height="5" fill="#fff"/><path d="M3 2v6M7 2v6M1 8h8v3l-3 2H4l-3-2z" stroke="#fff" fill="#fff"/></svg>
    <svg viewBox="0 0 20 20"><path d="M2 18q1-12 14-14M6 18q1-7 10-10M10 18q1-3 6-6M14 18q1-1 2-2" fill="none" stroke="#d8d8d8" stroke-width="1.200"/></svg>
    <svg viewBox="0 0 20 20"><path d="M2 7h3l4-4v14l-4-4H2z" fill="none" stroke="#fff"/><path d="M12 7q2 3 0 6M14 5q3 5 0 10M16 3q5 7 0 14" fill="none" stroke="#ddd"/></svg>
  </div>
  <div class="clock"><span>13:06</span><span>6-2-2017</span></div>
  <div class="notif"><svg viewBox="0 0 18 20"><path d="M1 1h16v13H9l-3 4v-4H1z" fill="none" stroke="#fff" stroke-width="1.200"/></svg></div>
</div>

<div class="menu">
  <div class="m-row m-on"><svg viewBox="0 0 18 18"><use href="#m1"/></svg><span>Selecteren met expressie</span></div>
  <div class="m-row"><svg viewBox="0 0 18 18"><use href="#m2"/></svg><span>Alle objecten selecteren</span><em>Ctrl+A</em></div>
  <div class="m-row"><svg viewBox="0 0 18 18"><use href="#m3"/></svg><span>Selectie van objecten omdraaien</span></div>
</div>

<div class="dialog">
  <div class="d-title">
    <svg viewBox="0 0 22 22"><use href="#qgis"/></svg>
    <span>Select by expression - wijkenbuurten2013:cbs_buurten_2013</span>
    <i class="d-q">?</i>
    <svg class="d-x" viewBox="0 0 12 12"><path d="M1 1l10 10M11 1L1 11" stroke="#8a8a8a"/></svg>
  </div>
  <div class="d-tabs"><span class="tab tab-on">Expressie</span><span class="tab">Functiebewerker</span></div>
  <div class="d-body">
    <div class="d-left">
      <div class="ops">
        <span class="op op-on">=</span><span class="op">+</span><span class="op">-</span><span class="op">/</span><span class="op">*</span><span class="op">^</span><span class="op">||</span><span class="op">(</span><span class="op">)</span><span class="op">'\n'</span>
      </div>
      <div class="editor">
        <div class="code"><span class="str">"percentage_niet_westerse_allochtonen"</span> <b class="gt">&gt;</b> <span class="num">25</span></div>
        <div class="hscroll">
          <span class="sb"><svg viewBox="0 0 6 10"><path d="M6 0v10L0 5z" fill="#111"/></svg></span>
          <span class="hthumb"></span>
          <span class="hspace"></span>
          <span class="sb"><svg viewBox="0 0 6 10"><path d="M6 0v10L0 5z" fill="#111"/></svg></span>
          <span class="sb"><svg viewBox="0 0 6 10"><path d="M0 0v10l6-5z" fill="#111"/></svg></span>
        </div>
      </div>
      <div class="preview"><span>Uitvoer voorvertoning:</span><span>0</span></div>
    </div>
    <div class="d-right">
      <div class="search">Zoek</div>
      <div class="list">
        <div class="rows">
          <div class="row">percentage_uit_turkije</div>
          <div class="row">percentage_uit_suriname</div>
          <div class="row">sterfte_relatief</div>
          <div class="row">aandeel_stadsverwarming</div>
          <div class="row">percentage_huishoudens_onder_of_rond_sociaal_minimum</div>
          <div class="row">percentage_overige_niet_westerse_allochtonen</div>
          <div class="row">percentage_ongehuwd</div>
          <div class="row">percentage_niet_actieven_2</div>
          <div class="row row-h">percentage_niet_westerse_allochtonen</div>
          <div class="row">percentage_meergezinswoning</div>
          <div class="row">percentage_uit_marokko</div>
          <div class="row">percentage_huishoudens_met_lage_koopkracht</div>
          <div class="row">percentage_leegstand_woningen</div>
          <div class="row">percentage_personen_met_laag_inkomen</div>
          <div class="row">percentage_huishoudens_met_laag_inkomen</div>
          <div class="row">percentage_koopwoningen</div>
          <div class="row">percentage_huurwoningen</div>
        </div>
        <div class="vscroll">
          <span class="vb"><svg viewBox="0 0 10 6"><path d="M0 6h10L5 0z" fill="#111"/></svg></span>
          <span class="vthumb"></span>
          <span class="vspace"></span>
          <span class="vb"><svg viewBox="0 0 10 6"><path d="M0 6h10L5 0z" fill="#111"/></svg></span>
          <span class="vb"><svg viewBox="0 0 10 6"><path d="M0 0h10L5 6z" fill="#111"/></svg></span>
        </div>
      </div>
    </div>
  </div>
  <div class="d-foot">
    <span class="btn btn-sel"><svg viewBox="0 0 18 18"><use href="#m1"/></svg>Selecteren</span>
    <span class="btn-drop"><svg viewBox="0 0 11 6"><use href="#arrowd"/></svg></span>
    <span class="btn btn-close">Sluiten</span>
  </div>
</div>
</body>
</html>
```
FILE: styles.css
```css
* { box-sizing: border-box; }
html, body { margin: 0; padding: 0; }
body {
  width: 1600px; height: 900px; overflow: hidden; position: relative;
  background: #efefef; display: flex; flex-direction: column;
  font: 11px/1.2 "Liberation Sans", Arial, sans-serif; color: #111;
}
i, em, b { font-style: normal; }
.defs { width: 0; height: 0; display: block; flex: none; }

/* svg text */
.svg-tiny { font: bold 8px "Liberation Sans", sans-serif; fill: #888; text-anchor: middle; }
.svg-i { font: bold italic 15px "Liberation Serif", serif; fill: #fff; text-anchor: middle; }
.svg-eps { font: 26px "Liberation Serif", serif; fill: #6a2a80; text-anchor: middle; }
.svg-epsm { font: 17px "Liberation Serif", serif; fill: #4a2a80; text-anchor: middle; }
.svg-epsg { font: 26px "Liberation Serif", serif; fill: #b8b8b8; text-anchor: middle; }
.svg-sigma { font: bold 27px "Liberation Sans", sans-serif; fill: #7c1f8c; text-anchor: middle; }
.svg-t { font: bold 13px "Liberation Serif", serif; fill: #555; text-anchor: middle; }
.svg-help { font: bold 15px "Liberation Sans", sans-serif; fill: #dfe8f0; text-anchor: middle; }
.svg-abc { font: bold 10px "Liberation Sans", sans-serif; fill: #333; text-anchor: middle; }
.svg-abcg { font: bold 10px "Liberation Sans", sans-serif; fill: #777; text-anchor: middle; }
.svg-csw { font: bold 8.500px "Liberation Mono", monospace; fill: #666; text-anchor: middle; }
.svg-dc { font: bold 7px "Liberation Sans", sans-serif; fill: #fff; text-anchor: middle; }

/* title bar */
.titlebar { height: 24px; flex: none; background: #fff; display: flex; align-items: center; padding-left: 3px; }
.t-icon { width: 20px; height: 20px; }
.t-text { font-size: 12px; letter-spacing: -.3px; color: #111; }
.t-ctrl { margin-left: auto; display: flex; align-items: center; padding-right: 19px; gap: 33px; }
.t-btn { width: 12px; height: 12px; display: block; }

/* menu */
.menubar { height: 22px; flex: none; border-bottom: 1px solid #bdbdbd; display: flex; align-items: center; gap: 14px; padding-left: 9px; font-size: 11px; letter-spacing: -.05px; }

/* toolbars */
.toolbar { height: 38px; flex: none; display: flex; align-items: center; border-bottom: 1px solid #bdbdbd; }
.t2 { height: 39px; border-bottom: 0; }
.b { width: 35px; height: 34px; flex: none; display: flex; align-items: center; justify-content: center; }
.b svg { width: 27px; height: 27px; display: block; }
.pressed { width: 33px; margin-left: 1px; margin-right: 1px; background: #d9d9d9; border: 1px solid #9a9a9a; border-radius: 3px; }
.drop { width: 11px; height: 34px; flex: none; background: #d6d6d6; border: 1px solid #9a9a9a; border-radius: 4px; display: flex; align-items: center; justify-content: center; }
.drop svg { width: 9px; height: 5px; display: block; }
.arr { width: 12px; flex: none; display: flex; justify-content: center; }
.arr svg { width: 9px; height: 5px; display: block; }
.a10 { width: 10px; }
.grip-box { flex: none; height: 30px; display: flex; justify-content: flex-end; }
.g12 { width: 12px; justify-content: flex-start; padding-left: 6px; }
.g13 { width: 13.500px; justify-content: center; }
.g14 { width: 14px; justify-content: center; }
.g15 { width: 15px; justify-content: center; }
.g16 { width: 16px; justify-content: center; }
.grip { display: block; width: 6px; height: 30px; background: radial-gradient(circle, #d6d6d6 1px, transparent 1.300px) 0 0 / 3px 3px; }

/* main */
.main { display: flex; height: 706px; flex: none; }
.leftbar { width: 53px; flex: none; border-right: 1px solid #cfcfcf; display: flex; flex-direction: column; align-items: center; }
.lb { width: 52px; height: 34px; flex: none; display: flex; align-items: center; justify-content: center; padding-right: 3px; }
.lb svg { width: 27px; height: 27px; display: block; }
.lb-arrow { gap: 2px; padding: 0 0 0 12px; }
.lb .lb-a { width: 9px; height: 5px; }
.hgrip { display: block; height: 10px; width: 42px; flex: none; background: radial-gradient(circle, #d8d8d8 1px, transparent 1.300px) 0 0 / 3px 3px; }
.hgrip.mid { height: 16px; background-position: 0 8px; background-size: 3px 3px; background-repeat: repeat-x; }
.panel { width: 396px; flex: none; display: flex; flex-direction: column; }
.p-title { height: 22px; flex: none; display: flex; align-items: center; gap: 10px; padding: 0 1px 0 2px; }
.p-name { font-size: 10.500px; letter-spacing: -.2px; }
.p-grip { flex: 1; height: 6px; background: radial-gradient(circle, #d6d6d6 1px, transparent 1.300px) 0 0 / 3px 3px; }
.p-btn { width: 14px; height: 14px; flex: none; margin-left: -9px; background: #f4f4f4; border: 1px solid #555; border-radius: 2px; display: flex; align-items: center; justify-content: center; }
.p-btn svg { width: 10px; height: 10px; display: block; }
.p-tools { height: 26px; flex: none; display: flex; align-items: center; padding-left: 4px; gap: 4px; }
.p-tools svg { width: 22px; height: 22px; display: block; flex: none; }
.p-tools .p-arr { width: 9px; height: 5px; margin: 0 2px 0 -1px; }
.p-tree { flex: 1; margin-top: 10px; background: #fff; border: 1px solid #c4c4c4; border-radius: 2px; margin-right: 1px; }
.p-row { display: flex; align-items: center; height: 20px; padding-left: 10px; }
.p-tick { width: 12px; height: 7px; border-left: 1px dotted #888; border-bottom: 1px dotted #888; margin-top: -8px; }
.cb { width: 14px; height: 14px; flex: none; margin-left: 1px; background: #f5f5f5; border: 1px solid #b8b8b8; display: flex; align-items: center; justify-content: center; font-size: 10px; color: #000; }
.swatch { width: 16px; height: 16px; margin-left: 5px; background: #dc5a26; border: 1px solid #8a3a18; }
.layer { margin-left: 6px; font-size: 12px; text-decoration: underline; color: #000; font-weight: bold; }
.splitter { width: 7px; flex: none; display: flex; align-items: center; justify-content: center; }
.vgrip { display: block; width: 3px; height: 320px; margin-top: 80px; background: radial-gradient(circle, #d6d6d6 1px, transparent 1.200px) 0 0 / 3px 3px; }
.map { display: block; flex: none; }
.mp .y { fill: #ffff00; stroke: #111; stroke-width: 1px; vector-effect: non-scaling-stroke; stroke-linejoin: round; }
.mp .l { fill: none; stroke: #1a0d06; stroke-width: 1.100px; vector-effect: non-scaling-stroke; stroke-linejoin: round; }

/* status */
.status { height: 31px; flex: none; display: flex; align-items: center; padding: 3px 0 0 755px; font-size: 11px; }
.s-label { flex: none; letter-spacing: -.1px; }
.s-coord { width: 221px; height: 17px; margin-left: 5px; background: #fff; border: 1px solid #bbb; text-align: center; line-height: 15px; flex: none; }
.s-lock { width: 20px; height: 22px; flex: none; margin-left: 1px; background: #e4e4e4; border: 1px solid #aaa; border-radius: 3px; display: flex; align-items: center; justify-content: center; }
.s-lock svg { width: 14px; height: 16px; display: block; }
.s-schaal { margin-left: 8px; }
.s-combo { width: 88px; height: 17px; margin-left: 10px; background: #fff; border: 1px solid #bbb; padding-left: 5px; line-height: 15px; flex: none; display: flex; justify-content: space-between; }
.s-caret { width: 17px; background: #eee; border-left: 1px solid #ccc; display: flex; align-items: center; justify-content: center; }
.s-caret svg { width: 8px; height: 5px; display: block; }
.s-rot { margin-left: 9px; }
.s-spin { width: 96px; height: 17px; margin-left: 9px; background: #fff; border: 1px solid #bbb; padding-left: 5px; line-height: 15px; flex: none; display: flex; justify-content: space-between; }
.s-spinb { width: 16px; background: #eee; border-left: 1px solid #ccc; display: flex; align-items: center; justify-content: center; }
.s-spinb svg { width: 8px; height: 5px; display: block; }
.cb-s { margin-left: 8px; width: 13px; height: 13px; }
.s-ren { margin-left: 5px; }
.s-globe { width: 14px; height: 14px; margin-left: 18px; flex: none; }
.s-epsg { margin-left: 4px; letter-spacing: -.35px; }
.s-msg { width: 19px; height: 19px; margin-left: 22px; flex: none; }

/* taskbar */
.taskbar {
  height: 40px; flex: none; display: flex; align-items: center; color: #fff;
  background: linear-gradient(90deg, #121214 0, #19191b 190px, #141314 280px, #17181a 380px, #1a1b1d 500px, #0f0c0c 530px, #17191b 560px, #15181b 780px, #0e1b26 860px, #2a1613 900px, #111c27 985px, #1b1f23 1080px, #101a24 1200px, #0f1720 1600px);
}
.tk { width: 48px; height: 40px; flex: none; position: relative; display: flex; align-items: center; justify-content: center; }
.tk svg { width: 26px; height: 26px; display: block; }
.tk .tk-s { width: 18px; height: 18px; }
.w49 { width: 49px; }
.tk-first { width: 49px; margin-left: 2.500px; }
.on::after { content: ""; position: absolute; left: 5px; right: 5px; bottom: 0; height: 2px; background: #f4c8ab; }
.act { background: #3b3e40; }
.act::after { left: 0; right: 0; }
.edge { font: bold 34px/34px "Liberation Sans", sans-serif; color: #0f78d4; margin-top: -6px; }
.tray { margin-left: auto; display: flex; align-items: center; }
.tray svg { width: 18px; height: 18px; margin: 0 3px; display: block; flex: none; }
.clock { width: 64px; flex: none; display: flex; flex-direction: column; align-items: center; gap: 3px; font-size: 12px; line-height: 14px; }
.notif { width: 44px; margin-right: 11px; flex: none; display: flex; justify-content: center; }
.notif svg { width: 17px; height: 19px; display: block; }

/* popup menu */
.menu { position: absolute; left: 799px; top: 83px; width: 235px; height: 64px; background: #f9f9f9; border: 1px solid #c0c0c0; box-shadow: 2px 2px 4px rgba(0,0,0,.5); }
.m-row { height: 21px; display: flex; align-items: center; padding: 0 16px 0 3px; font-size: 11px; letter-spacing: -.1px; }
.m-row svg { width: 18px; height: 18px; flex: none; margin-right: 3px; display: block; }
.m-row em { margin-left: auto; }
.m-on { background: linear-gradient(#4aa2f8, #2f8eea); color: #eaf4ff; }

/* dialog */
.dialog { position: absolute; left: 632px; top: 465px; width: 883px; height: 374px; background: #efefef; box-shadow: 0 0 8px rgba(0,0,0,.55); display: flex; flex-direction: column; }
.d-title { height: 30px; flex: none; background: #fff; display: flex; align-items: center; padding-left: 7px; font-size: 12px; letter-spacing: -.2px; color: #9a9a9a; }
.d-title svg { width: 20px; height: 20px; flex: none; }
.d-title span { margin-left: 2px; }
.d-title .d-q { margin-left: auto; font-size: 14px; margin-right: -3px; }
.d-title .d-x { width: 12px; height: 12px; margin: 0 17px 0 39px; }
.d-tabs { height: 23px; flex: none; margin: 0 3px; border-bottom: 1px solid #b5b5b5; display: flex; align-items: flex-end; }
.tab { height: 18px; padding: 1px 10px 0; margin-left: 1px; border: 1px solid #bbb; border-bottom: 0; border-radius: 2px 2px 0 0; background: linear-gradient(#f4f4f4, #e4e4e4); display: flex; align-items: center; font-size: 11px; margin-bottom: -1px; }
.tab-on { height: 21px; margin: 0 0 -1px; padding: 0 10px; background: #efefef; }
.d-body { display: flex; flex: none; margin-top: 10px; padding-left: 4px; gap: 14px; height: 258px; }
.d-left { width: 451px; flex: none; display: flex; flex-direction: column; }
.ops { display: flex; gap: 3px; height: 23px; flex: none; }
.op { width: 27px; height: 23px; flex: none; padding-top: 1px; background: linear-gradient(#f6f6f6, #e6e6e6); border: 1px solid #bcbcbc; border-radius: 3px; display: flex; align-items: center; justify-content: center; font-size: 12px; color: #222; }
.op-on { border-color: #6a6a6a; width: 28px; margin-right: -1px; }
.editor { height: 218px; margin-top: 6px; flex: none; background: #fff; border: 1px solid #bcbcbc; border-radius: 2px; display: flex; flex-direction: column; }
.code { flex: 1; padding: 1px 0 0 6px; font: 13.300px/16px "Liberation Mono", monospace; white-space: nowrap; }
.str { color: #800080; }
.gt { font: bold 14px "Liberation Sans", sans-serif; color: #000; }
.num { font: 13.500px "Liberation Sans", sans-serif; color: #007a7a; margin-left: -2px; }
.hscroll { height: 16px; flex: none; background: repeating-conic-gradient(#e3e3e3 0 25%, #fff 0 50%) 0 0 / 2px 2px; display: flex; padding: 0 1px 1px 0; }
.sb { width: 15px; flex: none; background: #f3f3f3; border: 1px solid #aaa; border-radius: 2px; display: flex; align-items: center; justify-content: center; }
.sb svg { width: 4px; height: 8px; display: block; }
.hthumb { width: 36px; margin-left: 1px; flex: none; background: radial-gradient(circle, #c4c4c4 .7px, transparent 1px) center / 3px 3px, #f0f0f0; border: 1px solid #b8b8b8; border-radius: 2px; }
.hspace { flex: 1; }
.preview { display: flex; gap: 16px; margin: 8px 0 0 -2px; font-size: 11px; }
.d-right { width: 397px; flex: none; display: flex; flex-direction: column; }
.search { height: 24px; flex: none; background: #fff; border: 1px solid #bcbcbc; border-radius: 2px; padding-left: 4px; line-height: 24px; color: #777; font-size: 11px; }
.list { height: 225px; margin-top: 9px; flex: none; background: #fff; border: 1px solid #bcbcbc; border-radius: 2px; display: flex; }
.rows { flex: 1; padding-top: 1px; overflow: hidden; background: repeating-linear-gradient(#888 0 1px, transparent 1px 2px) 11px 0 / 1px 100% no-repeat, repeating-linear-gradient(#888 0 1px, transparent 1px 2px) 31px 0 / 1px 100% no-repeat; }
.row { height: 13px; line-height: 13px; font-size: 11px; letter-spacing: -.15px; padding-left: 32px; display: flex; align-items: center; white-space: nowrap; color: #111; }
.row::before { content: ""; width: 9px; margin-right: 2px; border-top: 1px dotted #999; flex: none; }
.row-h { background: #f0f0f0; }
.vscroll { width: 17px; flex: none; display: flex; flex-direction: column; padding: 1px 1px 1px 0; background: repeating-conic-gradient(#e3e3e3 0 25%, #fff 0 50%) 0 0 / 2px 2px; }
.vb { height: 16px; flex: none; background: #f3f3f3; border: 1px solid #888; border-radius: 3px; display: flex; align-items: center; justify-content: center; }
.vb svg { width: 8px; height: 4px; display: block; }
.vthumb { height: 26px; margin-top: 20px; flex: none; background: #f0f0f0; border: 1px solid #b8b8b8; border-radius: 2px; }
.vspace { flex: 1; }
.d-foot { display: flex; align-items: center; justify-content: flex-end; padding-right: 13px; margin-top: 19px; height: 30px; flex: none; }
.btn { display: flex; align-items: center; justify-content: center; padding-top: 1px; background: linear-gradient(#f6f6f6, #e6e6e6); border: 1px solid #bcbcbc; border-radius: 3px; font-size: 11px; color: #222; }
.btn-sel { width: 86px; height: 30px; border-color: #888; gap: 2px; }
.btn-sel svg { width: 17px; height: 17px; flex: none; }
.btn-drop { width: 12px; height: 30px; margin-left: 1px; background: #ececec; border: 1px solid #aaa; border-radius: 3px; display: flex; align-items: center; justify-content: center; }
.btn-drop svg { width: 9px; height: 5px; display: block; }
.btn-close { width: 75px; height: 23px; margin-left: 10px; }
```
